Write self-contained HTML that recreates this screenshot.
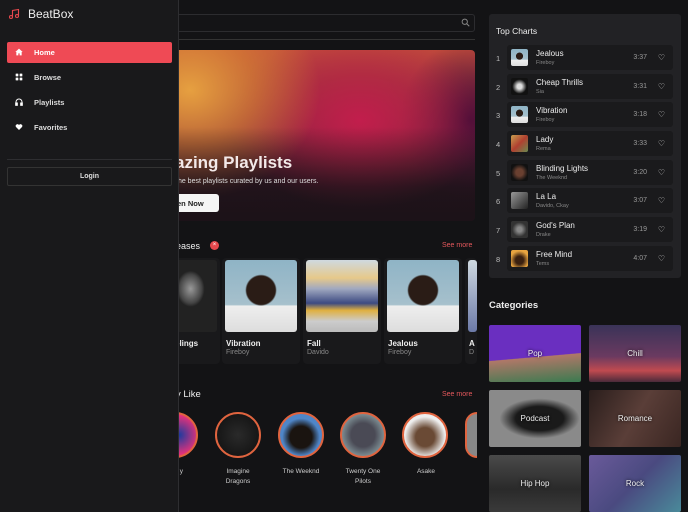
<!DOCTYPE html>
<html><head><style>
*{margin:0;padding:0;box-sizing:border-box}
body{width:688px;height:512px;overflow:hidden;background:#131315;font-family:"Liberation Sans",sans-serif;color:#eee;position:relative}
.a{position:absolute}
.row{position:absolute;left:507px;width:166px;height:25px;background:#1a1a1c;border-radius:3px}
.row .th{position:absolute;left:4px;top:4px;width:17px;height:17px;border-radius:2px}
.row .t{position:absolute;left:29px;top:4px;font-size:8px;color:#eee}
.row .s{position:absolute;left:29px;top:15px;font-size:5.5px;color:#888}
.row .d{position:absolute;right:26px;top:9px;font-size:7px;color:#999}
.row .h{position:absolute;right:8px;top:8px;font-size:8px;color:#ccc}
.num{position:absolute;left:496px;font-size:7.5px;color:#bbb}
.card{position:absolute;top:258px;width:78px;height:106px;background:#19191b;border-radius:4px}
.card .im{position:absolute;left:3px;top:2px;width:72px;height:72px;border-radius:3px}
.card .t{position:absolute;left:4px;top:81px;font-size:8px;color:#eee;font-weight:bold}
.card .s{position:absolute;left:4px;top:91px;font-size:7px;color:#888}
.circ{position:absolute;top:412px;width:46px;height:46px;border-radius:50%;border:2px solid #e0643f}
.cn{position:absolute;top:467px;width:70px;text-align:center;font-size:6.5px;line-height:10px;color:#ccc}
.cat{position:absolute;width:92px;height:57px;border-radius:2px;font-size:8px;color:#eee;display:flex;align-items:center;justify-content:center;text-shadow:0 0 3px #000}
.nav{position:absolute;left:15px;font-size:7.5px;color:#ddd;font-weight:bold}
.nav b{position:absolute;left:19px;top:0;white-space:nowrap}
.nav svg{position:absolute;left:0;top:0}
.fb{background:radial-gradient(ellipse 22% 22% at 50% 42%,#2a1c16 90%,transparent 100%),linear-gradient(180deg,#8fb4c6 0%,#a6c0cc 62%,#eee 64%,#ddd 100%)}
</style></head><body>
<div class="a" style="left:170px;top:14px;width:305px;height:18px;border:1px solid #2c2c2f;border-radius:3px;background:#141416"></div>
<svg class="a" style="left:461px;top:18px" width="9" height="9" viewBox="0 0 24 24" fill="none" stroke="#888" stroke-width="2.5"><circle cx="10" cy="10" r="7"/><path d="M15 15l7 7"/></svg>
<div class="a" style="left:170px;top:39px;width:305px;height:1px;background:#333"></div>
<div class="a" style="left:170px;top:50px;width:305px;height:171px;border-radius:4px;background:
radial-gradient(ellipse 130px 110px at 20px 40px,#e6a040 0%,rgba(220,140,50,.6) 50%,transparent 100%),
radial-gradient(ellipse 130px 90px at 190px 70px,#c21e4c 0%,rgba(180,30,70,.6) 50%,transparent 100%),
radial-gradient(ellipse 70px 80px at 300px 70px,#3e0c36,transparent),
linear-gradient(180deg,#c04a3c 0%,#8a2a40 45%,#2a1520 80%,#1c1418 100%)"></div>
<div class="a" style="left:170px;top:50px;width:305px;height:171px;border-radius:4px;background:linear-gradient(180deg,transparent 45%,rgba(28,18,24,.9) 100%)"></div>
<div class="a" style="left:175px;top:153px;font-size:17px;font-weight:bold;color:#f3e9e9">azing Playlists</div>
<div class="a" style="left:176px;top:178px;font-size:7px;color:#ddd">the best playlists curated by us and our users.</div>
<div class="a" style="left:168px;top:194px;width:51px;height:18px;background:#f5f5f5;border-radius:3px;font-size:7.5px;font-weight:bold;color:#222;padding:5px 0 0 9px">en Now</div>

<div class="a" style="left:176px;top:241px;font-size:9px;color:#eee">eases</div>
<div class="a" style="left:210px;top:241px;width:9px;height:9px;border-radius:50%;background:#e5484d;font-size:6px;color:#fff;text-align:center;line-height:9px">&#215;</div>
<div class="a" style="left:442px;top:242px;font-size:7px;color:#e5585c">See more</div>

<div class="card" style="left:142px"><div class="im" style="left:31px;width:44px;background:radial-gradient(ellipse 14px 18px at 40% 40%,#999,#444 80%,#222)"></div><div class="t" style="left:33px">elings</div></div>
<div class="card" style="left:222px"><div class="im fb"></div><div class="t">Vibration</div><div class="s">Fireboy</div></div>
<div class="card" style="left:303px"><div class="im" style="background:linear-gradient(180deg,#cfd9e0 0%,#e6c98a 25%,#a0a8c0 40%,#3c4a82 60%,#e0b040 70%,#ccc 85%,#bbb 100%)"></div><div class="t">Fall</div><div class="s">Davido</div></div>
<div class="card" style="left:384px"><div class="im fb"></div><div class="t">Jealous</div><div class="s">Fireboy</div></div>
<div class="card" style="left:465px;width:12px"><div class="im" style="width:9px;background:linear-gradient(180deg,#cfd9e0,#6c7aa8)"></div><div class="t">A</div><div class="s">D</div></div>

<div class="a" style="left:176px;top:389px;font-size:9.5px;color:#eee">y Like</div>
<div class="a" style="left:442px;top:391px;font-size:7px;color:#e5585c">See more</div>
<div class="circ" style="left:152px;background:radial-gradient(circle at 60% 50%,#1d3a9e,#e8327a 60%)"></div>
<div class="circ" style="left:215px;background:radial-gradient(circle,#2a2a2a,#0e0e0e)"></div>
<div class="circ" style="left:278px;background:radial-gradient(circle at 50% 55%,#1a1410 35%,#4f86c8 60%)"></div>
<div class="circ" style="left:340px;background:radial-gradient(circle,#4a4a55 40%,#7a8a90 70%)"></div>
<div class="circ" style="left:402px;background:radial-gradient(circle at 50% 55%,#6a4a35 30%,#eee 65%)"></div>
<div class="circ" style="left:465px;width:12px;border-right:none;border-radius:46px 0 0 46px;background:#888"></div>
<div class="cn" style="left:143px;text-align:right;width:40px">y</div>
<div class="cn" style="left:203px">Imagine<br>Dragons</div>
<div class="cn" style="left:266px">The Weeknd</div>
<div class="cn" style="left:328px">Twenty One<br>Pilots</div>
<div class="cn" style="left:391px">Asake</div>

<div class="a" style="left:489px;top:14px;width:192px;height:264px;background:#222225;border-radius:3px"></div>
<div class="a" style="left:496px;top:26px;font-size:8.5px;color:#eee">Top Charts</div>
<div class="num" style="top:54px">1</div><div class="row" style="top:45px"><div class="th fb"></div><div class="t">Jealous</div><div class="s">Fireboy</div><div class="d">3:37</div><div class="h">&#9825;</div></div>
<div class="num" style="top:83px">2</div><div class="row" style="top:74px"><div class="th" style="background:radial-gradient(circle,#ddd 20%,#111 60%)"></div><div class="t">Cheap Thrills</div><div class="s">Sia</div><div class="d">3:31</div><div class="h">&#9825;</div></div>
<div class="num" style="top:111px">3</div><div class="row" style="top:102px"><div class="th fb"></div><div class="t">Vibration</div><div class="s">Fireboy</div><div class="d">3:18</div><div class="h">&#9825;</div></div>
<div class="num" style="top:140px">4</div><div class="row" style="top:131px"><div class="th" style="background:linear-gradient(135deg,#c9a050,#b04030,#6a8a50)"></div><div class="t">Lady</div><div class="s">Rema</div><div class="d">3:33</div><div class="h">&#9825;</div></div>
<div class="num" style="top:169px">5</div><div class="row" style="top:160px"><div class="th" style="background:radial-gradient(circle,#6a4030 30%,#111 70%)"></div><div class="t">Blinding Lights</div><div class="s">The Weeknd</div><div class="d">3:20</div><div class="h">&#9825;</div></div>
<div class="num" style="top:197px">6</div><div class="row" style="top:188px"><div class="th" style="background:linear-gradient(135deg,#999,#222)"></div><div class="t">La La</div><div class="s">Davido, Ckay</div><div class="d">3:07</div><div class="h">&#9825;</div></div>
<div class="num" style="top:226px">7</div><div class="row" style="top:217px"><div class="th" style="background:radial-gradient(circle,#888 20%,#333 60%)"></div><div class="t">God's Plan</div><div class="s">Drake</div><div class="d">3:19</div><div class="h">&#9825;</div></div>
<div class="num" style="top:255px">8</div><div class="row" style="top:246px"><div class="th" style="background:radial-gradient(circle at 50% 60%,#3a2010 30%,#e8a440 70%)"></div><div class="t">Free Mind</div><div class="s">Tems</div><div class="d">4:07</div><div class="h">&#9825;</div></div>

<div class="a" style="left:489px;top:300px;font-size:9.5px;font-weight:bold;color:#eee">Categories</div>
<div class="cat" style="left:489px;top:325px;background:linear-gradient(175deg,#6a2fc0 0 55%,#b07868 56%,#3a7a50 100%)">Pop</div>
<div class="cat" style="left:589px;top:325px;background:linear-gradient(180deg,#3a3358,#6a3a60 55%,#c04a50 80%,#4a2a3a)">Chill</div>
<div class="cat" style="left:489px;top:390px;background:radial-gradient(ellipse 40px 20px at 55% 50%,#1a1a1a 60%,#8a8a8a 100%)">Podcast</div>
<div class="cat" style="left:589px;top:390px;background:linear-gradient(120deg,#2a1e1c,#5a3e38 50%,#3a2622)">Romance</div>
<div class="cat" style="left:489px;top:455px;background:linear-gradient(180deg,#4a4a4a,#2a2a2a 60%,#3a3a3a)">Hip Hop</div>
<div class="cat" style="left:589px;top:455px;background:linear-gradient(135deg,#6a5a9a,#4a4a80 50%,#4a8a9a)">Rock</div>

<div class="a" style="left:0;top:0;width:179px;height:512px;background:#19191b;border-right:1px solid #2e2e31"></div>
<svg class="a" style="left:8px;top:8px" width="12" height="12" viewBox="0 0 24 24" fill="none" stroke="#e5484d" stroke-width="2.2"><path d="M9 18V5l12-2v13"/><circle cx="6" cy="18" r="3"/><circle cx="18" cy="16" r="3"/></svg>
<div class="a" style="left:28px;top:7px;font-size:12px;color:#eee">BeatBox</div>
<div class="a" style="left:7px;top:42px;width:165px;height:21px;background:#ef4a55;border-radius:2px"></div>
<div class="nav" style="top:48px;color:#fff"><svg width="8" height="8" viewBox="0 0 24 24" fill="#fff"><path d="M12 2L1 12h3v10h6v-6h4v6h6V12h3z"/></svg><b>Home</b></div>
<div class="nav" style="top:73px"><svg width="8" height="8" viewBox="0 0 24 24" fill="#fff"><rect x="2" y="2" width="8" height="8" rx="1"/><rect x="14" y="2" width="8" height="8" rx="1"/><rect x="2" y="14" width="8" height="8" rx="1"/><rect x="14" y="14" width="8" height="8" rx="1"/></svg><b>Browse</b></div>
<div class="nav" style="top:98px"><svg width="8" height="8" viewBox="0 0 24 24" fill="none" stroke="#fff" stroke-width="3"><path d="M3 18v-6a9 9 0 0118 0v6"/><rect x="2" y="15" width="5" height="7" fill="#fff"/><rect x="17" y="15" width="5" height="7" fill="#fff"/></svg><b>Playlists</b></div>
<div class="nav" style="top:123px"><svg width="8" height="8" viewBox="0 0 24 24" fill="#fff"><path d="M12 21l-9-9a5 5 0 019-6 5 5 0 019 6z"/></svg><b>Favorites</b></div>
<div class="a" style="left:7px;top:159px;width:165px;height:1px;background:#2e2e31"></div>
<div class="a" style="left:7px;top:167px;width:165px;height:19px;border:1px solid #333;border-radius:2px;font-size:7px;color:#ddd;text-align:center;line-height:17px;font-weight:bold">Login</div>
</body></html>
